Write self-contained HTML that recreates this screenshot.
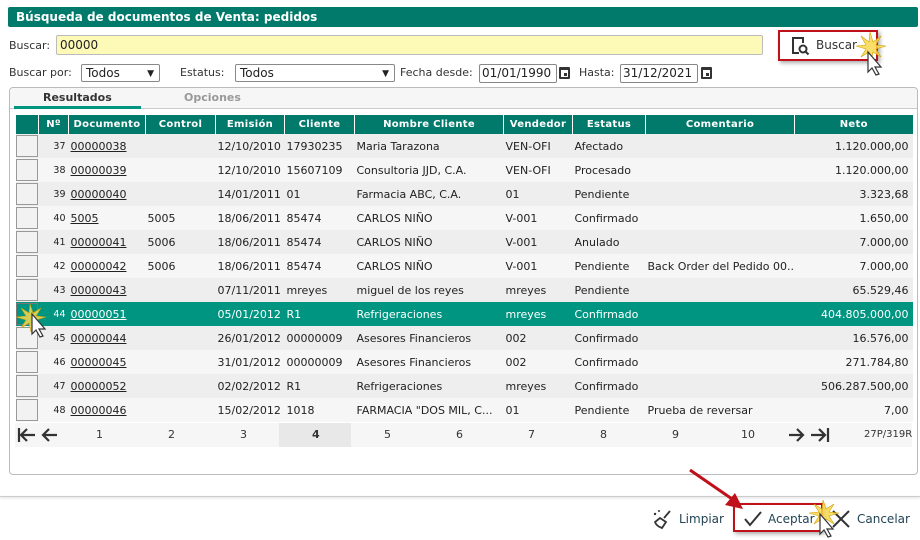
<!DOCTYPE html>
<html><head><meta charset="utf-8"><style>
*{box-sizing:border-box;margin:0;padding:0}
body{width:920px;height:540px;background:#fff;font-family:"DejaVu Sans","Liberation Sans",sans-serif;font-size:11px;color:#222;position:relative;overflow:hidden}
.abs{position:absolute}
.title{left:8px;top:7px;width:910px;height:20px;background:#027a6b;color:#fff;font-weight:bold;font-size:12px;line-height:20px;padding-left:8px;border-radius:2px}
.lbl{color:#333;font-size:11px}
.sel{border:1px solid #888;background:#fff;font-size:12px;line-height:16px;padding-left:4px;border-radius:2px}
.sel:after{content:"▼";position:absolute;right:5px;top:1px;font-size:9px}
.date{border:1px solid #888;background:#fff;font-size:12px;line-height:17px;padding-left:2px;border-radius:2px}
.cal{width:11px;height:12px;border:2px solid #333;border-top-width:3px;border-radius:1px}
.cal:after{content:"";position:absolute;right:1px;bottom:1px;width:3px;height:3px;background:#333}
table{border-collapse:collapse;table-layout:fixed;position:absolute;left:15px;top:115px;width:897px}
th{background:#027a6b;color:#fff;font-size:10px;font-weight:bold;height:19px;border-left:1px solid #fff;letter-spacing:.3px}
td{height:24px;white-space:nowrap;overflow:hidden;padding:0 2px;font-size:11px}
tr.o td{background:#eeeeee}tr.e td{background:#f6f6f6}
tr.s td{background:#009580;color:#fff}
td u{text-decoration:underline}
td.n{text-align:right;font-size:9.5px;padding-right:3px}
td.r{text-align:right;padding-right:4px}
.cb{width:22px;height:22px;border:1px solid #999;background:#f2f2f2;margin-left:-2px}
.pg{left:15px;top:423px;width:897px;height:24px;background:#f6f6f6}
.pg span{position:absolute;top:5px;font-size:11px;color:#333}
</style></head><body>
<div class="abs title">Búsqueda de documentos de Venta: pedidos</div>
<div class="abs lbl" style="left:9px;top:39px">Buscar:</div>
<div class="abs" style="left:56px;top:35px;width:707px;height:20px;background:#fdf9b6;border:1px solid #bbb;border-radius:2px;font-size:12px;line-height:18px;padding-left:3px">00000</div>
<div class="abs" style="left:778px;top:30px;width:100px;height:31px;border:2px solid #c0101a;box-shadow:2px 2px 4px #aaa"></div>
<svg class="abs" style="left:790px;top:35px" width="22" height="22" viewBox="0 0 22 22"><path d="M9 18H3V3h10v5" fill="none" stroke="#333" stroke-width="2"/><circle cx="13" cy="14" r="3.5" fill="none" stroke="#333" stroke-width="2"/><path d="M15.5 16.5l3 3" stroke="#333" stroke-width="2"/></svg>
<div class="abs" style="left:816px;top:38px;font-size:12px;color:#333">Buscar</div>
<svg class="abs" style="left:852px;top:30px" width="44" height="48" viewBox="0 0 44 48"><path d="M18 2l3 10 8-6-5 9 10 1-10 3 5 8-8-5-2 9-2-9-8 5 5-8-10-3 10-1-5-9 8 6z" fill="#f8d850" fill-opacity=".85" stroke="#d0a000" stroke-width=".6"/><path d="M16 22v20l4-4 4 7 3-1-4-7h6z" fill="#fff" stroke="#333" stroke-width="1.2"/></svg>
<div class="abs lbl" style="left:9px;top:66px">Buscar por:</div>
<div class="abs sel" style="left:81px;top:64px;width:79px;height:18px">Todos</div>
<div class="abs lbl" style="left:180px;top:66px">Estatus:</div>
<div class="abs sel" style="left:235px;top:64px;width:160px;height:18px">Todos</div>
<div class="abs lbl" style="left:400px;top:66px">Fecha desde:</div>
<div class="abs date" style="left:479px;top:64px;width:78px;height:19px">01/01/1990</div>
<div class="abs cal" style="left:559px;top:67px"></div>
<div class="abs lbl" style="left:579px;top:66px">Hasta:</div>
<div class="abs date" style="left:620px;top:64px;width:78px;height:19px">31/12/2021</div>
<div class="abs cal" style="left:701px;top:67px"></div>
<div class="abs" style="left:9px;top:87px;width:909px;height:388px;border:1px solid #bbb;border-radius:4px;background:#fff"></div>
<div class="abs" style="left:10px;top:88px;width:907px;height:21px;background:#f6f6f6;border-bottom:1px solid #ccc;border-radius:4px 4px 0 0"></div>
<div class="abs" style="left:43px;top:91px;font-weight:bold;color:#333">Resultados</div>
<div class="abs" style="left:14px;top:106px;width:127px;height:3px;background:#009580"></div>
<div class="abs" style="left:184px;top:91px;font-weight:bold;color:#999">Opciones</div>
<table>
<colgroup><col style="width:23px"><col style="width:30px"><col style="width:77px"><col style="width:70px"><col style="width:69px"><col style="width:70px"><col style="width:149px"><col style="width:69px"><col style="width:73px"><col style="width:149px"><col style="width:118px"></colgroup>
<tr><th></th><th>Nº</th><th>Documento</th><th>Control</th><th>Emisión</th><th>Cliente</th><th>Nombre Cliente</th><th>Vendedor</th><th>Estatus</th><th>Comentario</th><th>Neto</th></tr>
<tr class="o"><td><div class="cb"></div></td><td class="n">37</td><td><u>00000038</u></td><td></td><td>12/10/2010</td><td>17930235</td><td>Maria Tarazona</td><td>VEN-OFI</td><td>Afectado</td><td></td><td class="r">1.120.000,00</td></tr>
<tr class="e"><td><div class="cb"></div></td><td class="n">38</td><td><u>00000039</u></td><td></td><td>12/10/2010</td><td>15607109</td><td>Consultoria JJD, C.A.</td><td>VEN-OFI</td><td>Procesado</td><td></td><td class="r">1.120.000,00</td></tr>
<tr class="o"><td><div class="cb"></div></td><td class="n">39</td><td><u>00000040</u></td><td></td><td>14/01/2011</td><td>01</td><td>Farmacia ABC, C.A.</td><td>01</td><td>Pendiente</td><td></td><td class="r">3.323,68</td></tr>
<tr class="e"><td><div class="cb"></div></td><td class="n">40</td><td><u>5005</u></td><td>5005</td><td>18/06/2011</td><td>85474</td><td>CARLOS NIÑO</td><td>V-001</td><td>Confirmado</td><td></td><td class="r">1.650,00</td></tr>
<tr class="o"><td><div class="cb"></div></td><td class="n">41</td><td><u>00000041</u></td><td>5006</td><td>18/06/2011</td><td>85474</td><td>CARLOS NIÑO</td><td>V-001</td><td>Anulado</td><td></td><td class="r">7.000,00</td></tr>
<tr class="e"><td><div class="cb"></div></td><td class="n">42</td><td><u>00000042</u></td><td>5006</td><td>18/06/2011</td><td>85474</td><td>CARLOS NIÑO</td><td>V-001</td><td>Pendiente</td><td>Back Order del Pedido 00...</td><td class="r">7.000,00</td></tr>
<tr class="o"><td><div class="cb"></div></td><td class="n">43</td><td><u>00000043</u></td><td></td><td>07/11/2011</td><td>mreyes</td><td>miguel de los reyes</td><td>mreyes</td><td>Pendiente</td><td></td><td class="r">65.529,46</td></tr>
<tr class="s"><td><div class="cb" style="background:#009580;border-color:#777"></div></td><td class="n">44</td><td><u>00000051</u></td><td></td><td>05/01/2012</td><td>R1</td><td>Refrigeraciones</td><td>mreyes</td><td>Confirmado</td><td></td><td class="r">404.805.000,00</td></tr>
<tr class="o"><td><div class="cb"></div></td><td class="n">45</td><td><u>00000044</u></td><td></td><td>26/01/2012</td><td>00000009</td><td>Asesores Financieros</td><td>002</td><td>Confirmado</td><td></td><td class="r">16.576,00</td></tr>
<tr class="e"><td><div class="cb"></div></td><td class="n">46</td><td><u>00000045</u></td><td></td><td>31/01/2012</td><td>00000009</td><td>Asesores Financieros</td><td>002</td><td>Confirmado</td><td></td><td class="r">271.784,80</td></tr>
<tr class="o"><td><div class="cb"></div></td><td class="n">47</td><td><u>00000052</u></td><td></td><td>02/02/2012</td><td>R1</td><td>Refrigeraciones</td><td>mreyes</td><td>Confirmado</td><td></td><td class="r">506.287.500,00</td></tr>
<tr class="e"><td><div class="cb"></div></td><td class="n">48</td><td><u>00000046</u></td><td></td><td>15/02/2012</td><td>1018</td><td>FARMACIA "DOS MIL, C...</td><td>01</td><td>Pendiente</td><td>Prueba de reversar</td><td class="r">7,00</td></tr>
</table>
<svg class="abs" style="left:12px;top:302px" width="40" height="44" viewBox="0 0 40 44"><path d="M18 2l3 9 8-5-5 8 10 1-10 3 5 8-8-5-2 9-2-9-8 5 5-8-10-3 10-1-5-8 8 5z" fill="#f8d850" fill-opacity=".85" stroke="#d0a000" stroke-width=".6"/><path d="M20 12v20l4-4 4 7 3-1-4-7h6z" fill="#fff" stroke="#333" stroke-width="1.2"/></svg>
<div class="abs pg">
<svg class="abs" style="left:2px;top:4px" width="44" height="16" viewBox="0 0 44 16"><path d="M2 1v14M4 8h14M10 2L4 8l6 6M26 8h14M32 2l-6 6 6 6" fill="none" stroke="#333" stroke-width="2.2"/></svg>
<span style="left:81px">1</span><span style="left:153px">2</span><span style="left:225px">3</span>
<div class="abs" style="left:264px;top:0;width:72px;height:24px;background:#e8e8e8"></div>
<span style="left:297px;font-weight:bold">4</span><span style="left:369px">5</span><span style="left:441px">6</span><span style="left:513px">7</span><span style="left:585px">8</span><span style="left:657px">9</span><span style="left:726px">10</span>
<svg class="abs" style="left:772px;top:4px" width="44" height="16" viewBox="0 0 44 16"><path d="M2 8h14M10 2l6 6-6 6M24 8h14M32 2l6 6-6 6M41 1v14" fill="none" stroke="#333" stroke-width="2.2"/></svg>
<span style="left:849px;font-size:10px;top:6px">27P/319R</span>
</div>
<div class="abs" style="left:0;top:496px;width:920px;height:1px;background:#ccc;box-shadow:0 1px 2px #ccc"></div>
<svg class="abs" style="left:652px;top:508px" width="22" height="22" viewBox="0 0 22 22"><path d="M18 3l-6 7M8 10l6 4-4 6c-3-1-6-3-7-6z" fill="none" stroke="#333" stroke-width="1.8"/><circle cx="3" cy="6" r="1.2" fill="#333"/><circle cx="7" cy="3" r="1" fill="#333"/></svg>
<div class="abs" style="left:679px;top:512px;font-size:12px;color:#245">Limpiar</div>
<div class="abs" style="left:733px;top:503px;width:90px;height:29px;border:2px solid #c0101a;box-shadow:2px 2px 4px #aaa"></div>
<svg class="abs" style="left:743px;top:510px" width="20" height="18" viewBox="0 0 20 18"><path d="M2 9l5 6L18 2" fill="none" stroke="#333" stroke-width="2"/></svg>
<div class="abs" style="left:768px;top:512px;font-size:12px;color:#245">Aceptar</div>
<svg class="abs" style="left:830px;top:508px" width="22" height="22" viewBox="0 0 22 22"><path d="M3 3l16 16M19 3L3 19" stroke="#333" stroke-width="2"/></svg>
<div class="abs" style="left:857px;top:512px;font-size:12px;color:#245">Cancelar</div>
<svg class="abs" style="left:805px;top:498px" width="42" height="42" viewBox="0 0 42 42"><path d="M18 2l3 9 8-5-5 8 10 1-10 3 5 8-8-5-2 9-2-9-8 5 5-8-10-3 10-1-5-8 8 5z" fill="#f8d850" fill-opacity=".85" stroke="#d0a000" stroke-width=".6"/><path d="M15 16v20l4-4 4 7 3-1-4-7h6z" fill="#fff" stroke="#333" stroke-width="1.2"/></svg>
<svg class="abs" style="left:685px;top:465px" width="70" height="50" viewBox="0 0 70 50"><path d="M5 5L50 36" stroke="#c0101a" stroke-width="3"/><path d="M58 44L40 40 50 28z" fill="#c0101a"/></svg>
</body></html>
